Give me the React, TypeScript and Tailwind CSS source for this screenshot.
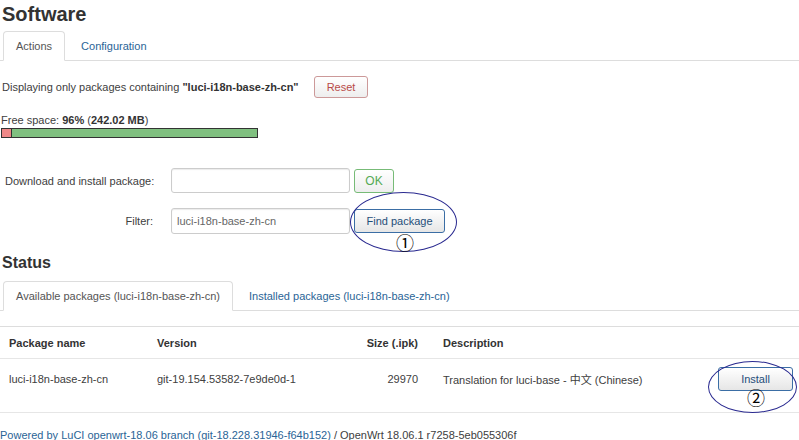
export default function App() {
  return (
    <div className="relative w-[799px] h-[440px] overflow-hidden whitespace-nowrap bg-white text-[11px] leading-[14px] text-[#404040] font-['Liberation_Sans',Arial,sans-serif]">
      <h1 className="pl-[2px] text-[20px] font-bold leading-[28px] text-[#333]">Software</h1>

      <div className="mt-[3px] flex h-[30px] border-b border-[#ddd] pl-[3px]">
        <div className="-mb-px flex items-center rounded-t-[4px] border border-[#ddd] border-b-white bg-white px-[12px] text-[#555]">
          Actions
        </div>
        <div className="flex items-center pl-[16px] text-[#2a6496]">Configuration</div>
      </div>

      <div className="mt-[15px] flex h-[22px] items-center">
        <span className="w-[314px] pl-[2px]">
          Displaying only packages containing <b className="text-[#333]">"luci-i18n-base-zh-cn"</b>
        </span>
        <button className="h-[22px] w-[54px] rounded-[3px] border border-[#c99] bg-gradient-to-b from-white to-[#eee] text-[#b94a48]">
          Reset
        </button>
      </div>

      <div className="mt-[15px] pl-[1px]">
        Free space: <b className="text-[#333]">96%</b> (<b className="text-[#333]">242.02 MB</b>)
      </div>
      <div className="ml-[1px] mt-[1px] flex h-[10px] w-[257px] border border-[#333]">
        <div className="w-[10px] border-r border-[#333] bg-[#e88]" />
        <div className="flex-1 bg-[#80c080]" />
      </div>

      <div className="mt-[30px] flex h-[25px] items-center">
        <label className="w-[171px] pl-[5px]">Download and install package:</label>
        <input className="h-[25px] w-[179px] rounded-[3px] border border-[#ccc] px-[5px] shadow-[inset_0_1px_1px_rgba(0,0,0,0.08)]" />
        <button className="ml-[4px] h-[24px] w-[40px] rounded-[3px] border border-[#7b7] bg-gradient-to-b from-white to-[#eee] text-[12px] text-[#5a5]">
          OK
        </button>
      </div>

      <div className="mt-[15px] flex h-[26px] items-center">
        <label className="w-[171px] pr-[18px] text-right">Filter:</label>
        <input
          readOnly
          value="luci-i18n-base-zh-cn"
          className="h-[26px] w-[179px] rounded-[3px] border border-[#ccc] px-[5px] text-[#666] shadow-[inset_0_1px_1px_rgba(0,0,0,0.08)]"
        />
        <button className="ml-[4px] h-[24px] w-[91px] rounded-[3px] border border-[#3b6ea5] bg-gradient-to-b from-white to-[#e6e6e6] text-[#1f4e79]">
          Find package
        </button>
      </div>

      <h2 className="mt-[20px] pl-[2px] text-[16px] font-bold leading-[18px] text-[#333]">Status</h2>

      <div className="mt-[9px] flex h-[30px] border-b border-[#ddd] pl-[3px]">
        <div className="-mb-px flex items-center rounded-t-[4px] border border-[#ddd] border-b-white bg-white px-[12px] text-[#555]">
          Available packages (luci-i18n-base-zh-cn)
        </div>
        <div className="flex items-center pl-[16px] text-[#2a6496]">Installed packages (luci-i18n-base-zh-cn)</div>
      </div>

      <div className="mt-[15px] border-t border-[#ddd]">
        <div className="flex h-[31px] items-center font-bold text-[#333]">
          <div className="w-[149px] pl-[9px]">Package name</div>
          <div className="w-[151px] pl-[8px]">Version</div>
          <div className="w-[127px] pr-[9px] text-right">Size (.ipk)</div>
          <div className="flex-1 pl-[16px]">Description</div>
        </div>
        <div className="flex h-[55px] items-start border-t border-b border-[#e6e6e6]">
          <div className="mt-[13px] w-[149px] pl-[9px]">luci-i18n-base-zh-cn</div>
          <div className="mt-[13px] w-[151px] pl-[8px]">git-19.154.53582-7e9de0d-1</div>
          <div className="mt-[13px] w-[127px] pr-[9px] text-right">29970</div>
          <div className="mt-[13px] w-[291px] pl-[16px]">
            Translation for luci-base - <span className="font-['Noto_Sans_CJK_SC',sans-serif]">中文</span> (Chinese)
          </div>
          <button className="mt-[8px] h-[24px] w-[75px] rounded-[3px] border border-[#3b6ea5] bg-gradient-to-b from-white to-[#e6e6e6] text-[#1f4e79]">
            Install
          </button>
        </div>
      </div>

      <div className="mt-[15px]">
        <span className="text-[#2a6496]">Powered by LuCI openwrt-18.06 branch (git-18.228.31946-f64b152)</span> / OpenWrt 18.06.1 r7258-5eb055306f
      </div>

      <div className="pointer-events-none absolute left-[350px] top-[192px] h-[60px] w-[107px] rounded-[50%] border border-[#2a2a90]" />
      <div className="absolute left-[396px] top-[232px] text-[18px] leading-[20px] text-black font-['Noto_Sans_CJK_SC',sans-serif]">①</div>
      <div className="pointer-events-none absolute left-[708px] top-[361px] h-[52px] w-[89px] rounded-[50%] border border-[#2a2a90]" />
      <div className="absolute left-[747px] top-[387px] text-[18px] leading-[20px] text-black font-['Noto_Sans_CJK_SC',sans-serif]">②</div>
    </div>
  );
}
